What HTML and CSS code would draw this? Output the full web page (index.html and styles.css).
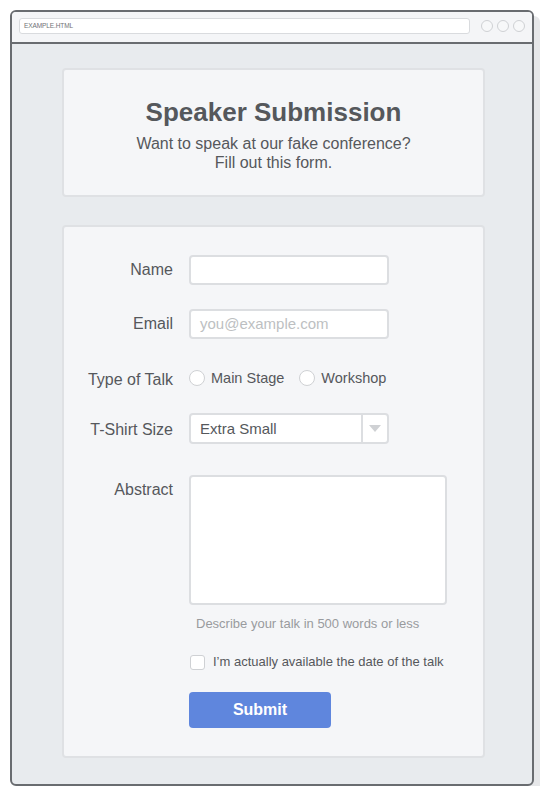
FILE: index.html
```html
<!DOCTYPE html>
<html>
<head>
<meta charset="utf-8">
<link rel="stylesheet" href="styles.css">
</head>
<body>
<div class="window">
  <div class="topbar">
    <div class="address">EXAMPLE.HTML</div>
    <div class="dots"><span class="dot"></span><span class="dot"></span><span class="dot"></span></div>
  </div>
  <div class="content">
    <div class="card header">
      <h1 class="title">Speaker Submission</h1>
      <p class="subtitle">Want to speak at our fake conference?<br>Fill out this form.</p>
    </div>
    <form class="card form">
      <div class="row row-name">
        <label class="label">Name</label>
        <div class="field input"></div>
      </div>
      <div class="row row-email">
        <label class="label">Email</label>
        <div class="field input placeholder">you@example.com</div>
      </div>
      <div class="row row-type">
        <label class="label">Type of Talk</label>
        <div class="radios">
          <span class="radio-item"><span class="radio"></span>Main Stage</span>
          <span class="radio-item"><span class="radio"></span>Workshop</span>
        </div>
      </div>
      <div class="row row-size">
        <label class="label">T-Shirt Size</label>
        <div class="field select">
          <span class="select-text">Extra Small</span>
          <span class="select-arrow"><svg width="12" height="7" viewBox="0 0 12 7"><path d="M0 0 L12 0 L6 7 Z" fill="#cfd1d4"/></svg></span>
        </div>
      </div>
      <div class="row row-abstract">
        <label class="label">Abstract</label>
        <div class="abstract-col">
          <div class="field textarea"></div>
          <div class="help">Describe your talk in 500 words or less</div>
          <div class="check-row"><span class="checkbox"></span>I’m actually available the date of the talk</div>
          <div class="submit">Submit</div>
        </div>
      </div>
    </form>
  </div>
</div>
</body>
</html>
```

FILE: styles.css
```css
* { box-sizing: border-box; }
html, body { margin: 0; padding: 0; background: #ffffff; }
body { font-family: "Liberation Sans", Arial, sans-serif; }

.window {
  margin: 10px 0 0 10px;
  width: 524px;
  height: 776px;
  border: 2px solid #696c70;
  border-radius: 6px;
  background: #e8ebee;
  box-shadow: 6px 6px 0 #e6e7e9;
  display: flex;
  flex-direction: column;
  overflow: hidden;
}

.topbar {
  height: 32px;
  flex: none;
  background: #f4f5f7;
  border-bottom: 2px solid #696c70;
  display: flex;
  align-items: flex-start;
  padding: 6px 7px 0 7px;
  gap: 11px;
}
.address {
  flex: 1;
  height: 16px;
  background: #ffffff;
  border: 1.5px solid #d9dbde;
  border-radius: 3px;
  font-size: 6.5px;
  color: #6f7276;
  line-height: 13px;
  padding-left: 4px;
  letter-spacing: -0.1px;
}
.dots { display: flex; gap: 4px; padding-top: 2px; }
.dot {
  width: 12px; height: 12px;
  border-radius: 50%;
  border: 1.5px solid #cfd1d4;
  background: #f7f8f9;
}

.content {
  flex: 1;
  padding: 24px 47px 0 50px;
}

.card {
  background: #f5f6f8;
  border: 2px solid #dfe1e4;
  border-radius: 4px;
}

.header {
  height: 129px;
  text-align: center;
  padding-top: 27px;
  color: #55585c;
}
.title {
  margin: 0;
  font-size: 26px;
  font-weight: bold;
  line-height: 30px;
  color: #55585c;
}
.subtitle {
  margin: 7px 0 0 0;
  font-size: 16px;
  line-height: 19px;
  color: #55585c;
}

.form {
  display: block;
  margin-top: 28px;
  height: 533px;
  padding: 28px 0 0 0;
}
.row {
  display: grid;
  grid-template-columns: 109px 1fr;
  column-gap: 16px;
  align-items: start;
}
.row-email { margin-top: 24px; }
.row-type { margin-top: 24px; }
.row-size { margin-top: 20px; }
.row-abstract { margin-top: 31px; }

.label {
  font-size: 16px;
  line-height: 30px;
  color: #55585c;
  text-align: right;
}
.row-type .label { padding-top: 3px; line-height: 27px; }
.row-size .label { padding-top: 3px; line-height: 28px; }

.field {
  background: #ffffff;
  border: 2px solid #dcdee1;
  border-radius: 4px;
}
.input {
  width: 200px;
  height: 30px;
  font-size: 15px;
  line-height: 26px;
  padding-left: 9px;
}
.placeholder { color: #bdbfc2; }

.radios {
  display: flex;
  align-items: center;
  height: 30px;
  font-size: 14.5px;
  color: #55585c;
  gap: 15px;
}
.radio-item { display: flex; align-items: center; gap: 6px; }
.radio {
  width: 16px; height: 16px;
  border-radius: 50%;
  border: 1.5px solid #cfd1d4;
  background: #ffffff;
}

.select {
  width: 200px;
  height: 31px;
  display: flex;
  align-items: stretch;
}
.select-text {
  flex: 1;
  font-size: 15px;
  line-height: 28px;
  padding-left: 9px;
  color: #55585c;
}
.select-arrow {
  width: 26px;
  border-left: 2px solid #dcdee1;
  display: flex;
  align-items: center;
  justify-content: center;
}

.abstract-col { display: flex; flex-direction: column; align-items: flex-start; }
.textarea { width: 258px; height: 130px; }
.help {
  margin-top: 10px;
  padding-left: 7px;
  font-size: 13px;
  line-height: 17px;
  color: #999b9e;
}
.check-row {
  margin-top: 22px;
  display: flex;
  align-items: center;
  gap: 8px;
  font-size: 13px;
  line-height: 16px;
  color: #55585c;
  padding-left: 1px;
}
.checkbox {
  width: 15px; height: 15px;
  border: 1.5px solid #cfd1d4;
  border-radius: 3px;
  background: #ffffff;
}
.submit {
  margin-top: 22px;
  width: 142px;
  height: 36px;
  background: #5f86dd;
  border-radius: 4px;
  color: #ffffff;
  font-weight: bold;
  font-size: 16px;
  line-height: 36px;
  text-align: center;
}
```
